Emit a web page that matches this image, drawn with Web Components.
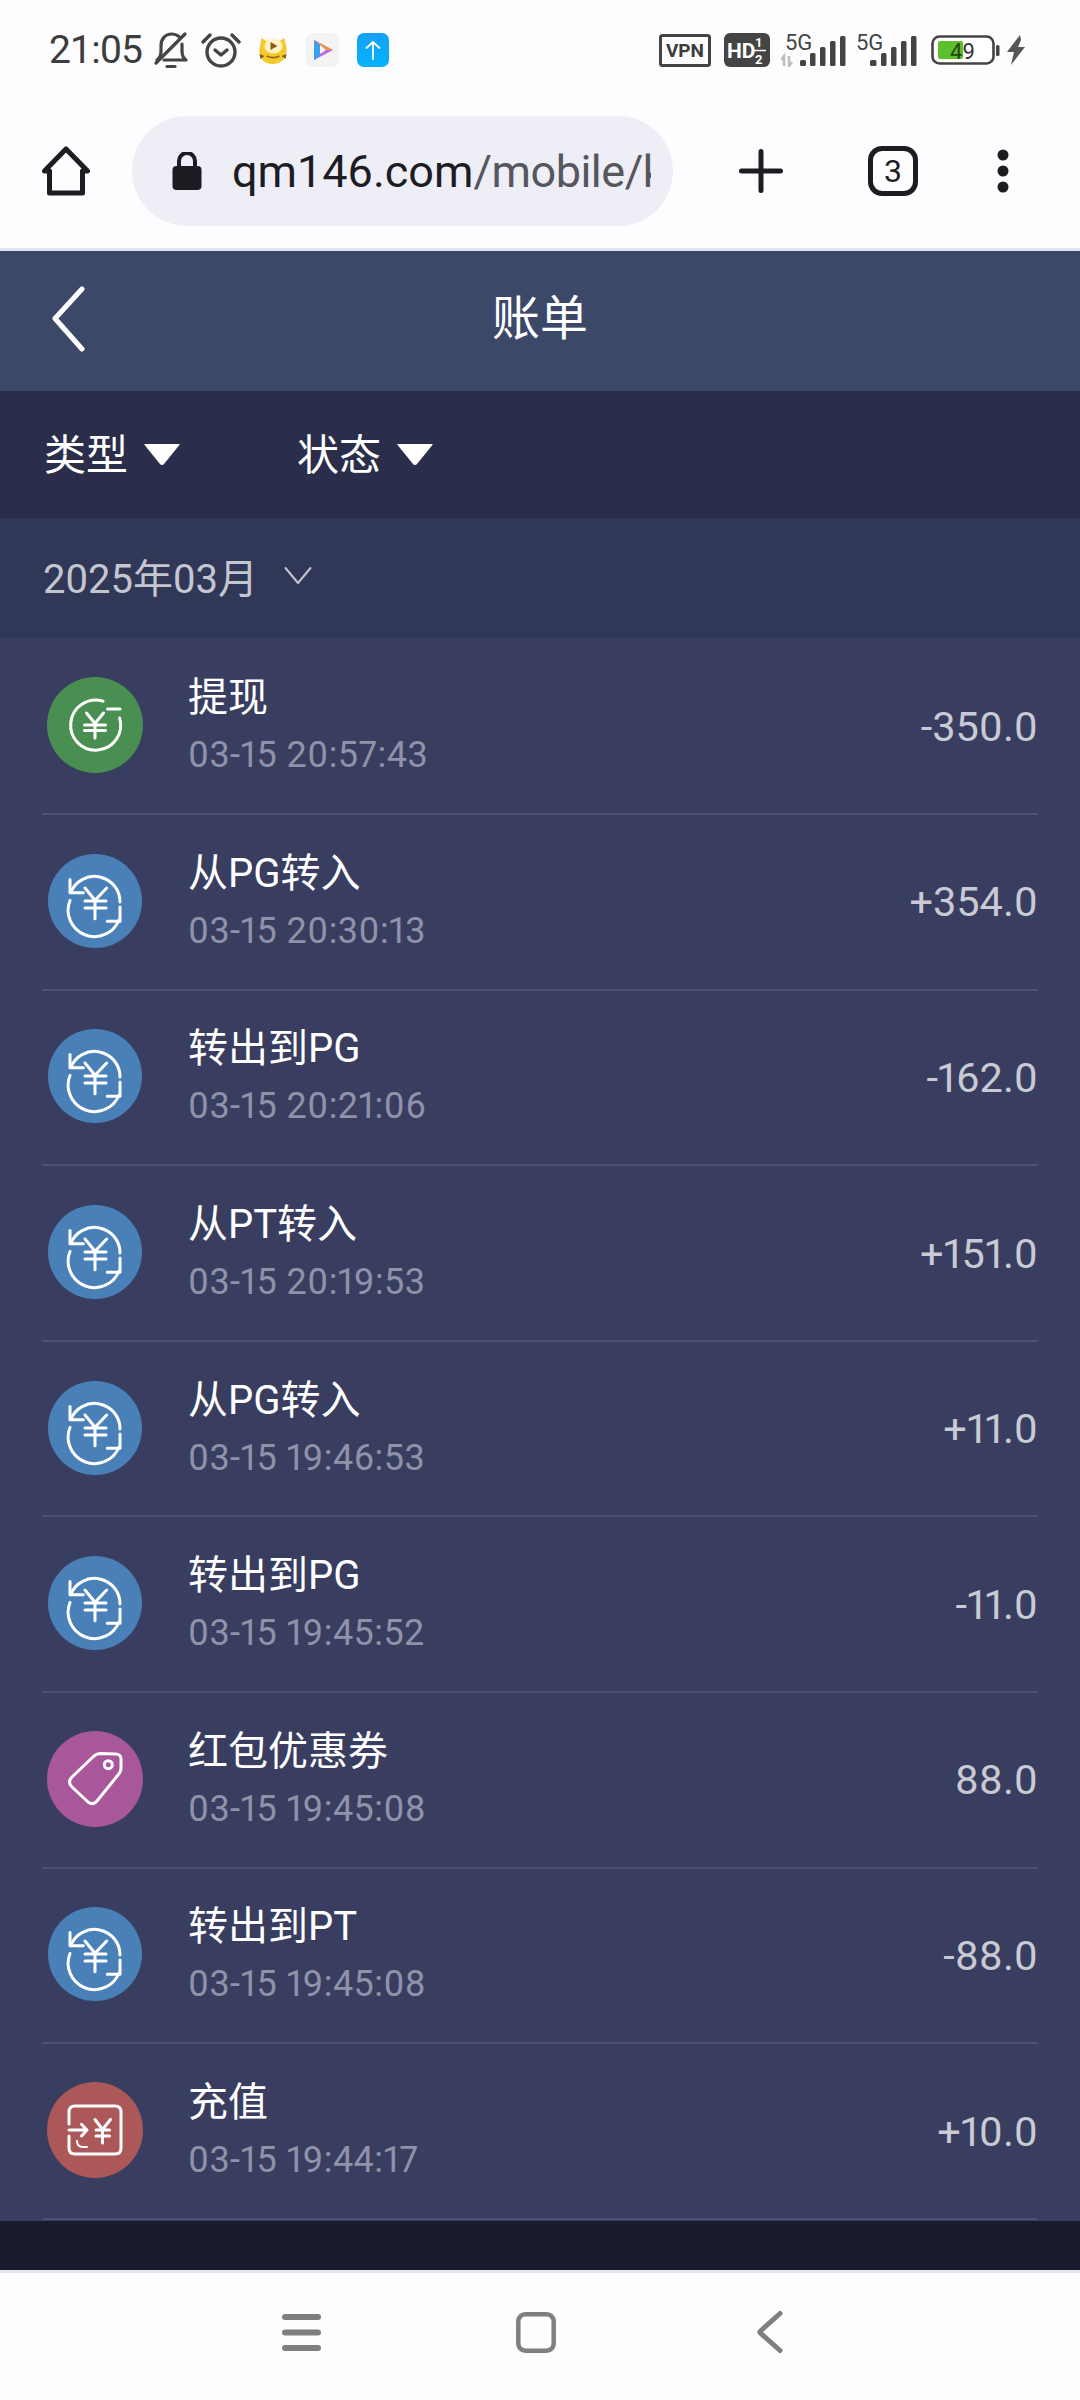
<!DOCTYPE html>
<html lang="zh">
<head>
<meta charset="utf-8">
<title>账单</title>
<style>
  html, body { margin: 0; padding: 0; }
  body {
    width: 1080px; height: 2400px; overflow: hidden;
    display: flex; flex-direction: column;
    background: #fdfcff;
    font-family: Roboto, "Noto Sans CJK SC", sans-serif;
  }
</style>
</head>
<body>
<status-bar></status-bar>
<browser-bar></browser-bar>
<bill-header>账单</bill-header>
<filter-bar>
  <filter-item>类型</filter-item>
  <filter-item>状态</filter-item>
</filter-bar>
<month-bar>2025年03月</month-bar>
<bill-list>
  <bill-row kind="withdraw" amount="-350.0" time="03-15 20:57:43">提现</bill-row>
  <bill-row kind="transfer" amount="+354.0" time="03-15 20:30:13">从PG转入</bill-row>
  <bill-row kind="transfer" amount="-162.0" time="03-15 20:21:06">转出到PG</bill-row>
  <bill-row kind="transfer" amount="+151.0" time="03-15 20:19:53">从PT转入</bill-row>
  <bill-row kind="transfer" amount="+11.0" time="03-15 19:46:53">从PG转入</bill-row>
  <bill-row kind="transfer" amount="-11.0" time="03-15 19:45:52">转出到PG</bill-row>
  <bill-row kind="coupon" amount="88.0" time="03-15 19:45:08">红包优惠券</bill-row>
  <bill-row kind="transfer" amount="-88.0" time="03-15 19:45:08">转出到PT</bill-row>
  <bill-row kind="recharge" amount="+10.0" time="03-15 19:44:17">充值</bill-row>
</bill-list>
<nav-bar></nav-bar>

<script>
class StatusBar extends HTMLElement {
  constructor() {
    super();
    this.attachShadow({ mode: 'open' });
    this.shadowRoot.innerHTML = `
      <style>
        :host { display: flex; align-items: center; height: 100px; box-sizing: border-box; padding: 0 55px 0 49px; color: #3c3c3c; font-family: Roboto, sans-serif; }
        svg { display: block; flex: none; }
        .time { font-size: 39px; letter-spacing: -.8px; line-height: 1; width: 104px; flex: none; }
        .left { display: flex; align-items: center; }
        .right { display: flex; align-items: center; margin-left: auto; }
        text { font-family: Roboto, sans-serif; }
      </style>
      <div class="left">
        <span class="time">21:05</span>
        <svg width="36" height="38" viewBox="0 0 36 38" fill="none" stroke="#444" stroke-width="3.200" stroke-linecap="round" stroke-linejoin="round">
          <path d="M4 29c3-2 4-5 4-9v-5C8 8 12 3 19 3c2.500 0 5 1 7 2.500"/><path d="M29 13v7c0 4 1 7 4 9H11"/>
          <path d="M3 32 32 3"/><path d="M14 35.500h8"/>
        </svg>
        <svg style="margin-left:12px" width="40" height="36" viewBox="0 0 40 36" fill="none" stroke="#444" stroke-width="3.400" stroke-linecap="round" stroke-linejoin="round">
          <circle cx="20" cy="20" r="14"/><path d="M14 18l6 5 6-5"/><path d="M2 10 9 3M38 10l-7-7"/>
        </svg>
        <svg style="margin-left:17px" width="30" height="30" viewBox="0 0 29 30">
          <path d="M3 3l5 3c4-2 9-2 13 0l5-3 2 10c1 9-4 16-14 16S0 22 1 13z" fill="#f6c92d"/>
          <ellipse cx="15" cy="11" rx="9" ry="7.500" fill="#fff3c4"/><path d="M12 7l7 4-7 4z" fill="#8b5a1e"/>
          <path d="M8 21c4 2 9 2 13 0" stroke="#8b6a1e" stroke-width="1.500" fill="none"/><path d="M1 19l5 2-4 3zM28 19l-5 2 4 3z" fill="#7a5a18"/>
        </svg>
        <svg style="margin-left:18px" width="33" height="34" viewBox="0 0 33 34">
          <rect width="33" height="34" rx="7" fill="#f3f3f1"/>
          <path d="M8 7l19 10L8 27z" fill="#b86cec"/><path d="M8 7l19 10-8 0z" fill="#f0933c"/><path d="M8 7l6 5v11l-6 4z" fill="#3aa0ee"/><path d="M14 12l6 5-6 4z" fill="#f3f3f1"/>
        </svg>
        <svg style="margin-left:17px" width="34" height="34" viewBox="0 0 32 34">
          <defs><linearGradient id="blue" x1="0" y1="0" x2="0" y2="1"><stop offset="0" stop-color="#14a0f6"/><stop offset="1" stop-color="#05b4fb"/></linearGradient></defs>
          <rect width="32" height="34" rx="7" fill="url(#blue)"/>
          <path d="M16 26V9M9.500 15 16 9l6.500 6" fill="none" stroke="#fff" stroke-width="1.800" stroke-linecap="round" stroke-linejoin="round"/>
        </svg>
      </div>
      <div class="right">
        <svg width="52" height="33" viewBox="0 0 52 33">
          <rect x="1.500" y="1.500" width="49" height="30" rx="2" fill="none" stroke="#444" stroke-width="3"/>
          <text x="26" y="23" font-size="19" font-weight="700" fill="#3c3c3c" text-anchor="middle">VPN</text>
        </svg>
        <svg style="margin-left:13px" width="46" height="34" viewBox="0 0 46 34">
          <rect width="46" height="34" rx="6" fill="#444"/>
          <text x="3" y="25" font-size="21" font-weight="700" fill="#fff">HD</text>
          <text x="31" y="14" font-size="13" font-weight="700" fill="#fff">1</text>
          <text x="31" y="31" font-size="13" font-weight="700" fill="#fff">2</text>
          <path d="M30 17.500h12" stroke="#fff" stroke-width="1.500"/>
        </svg>
        <svg style="margin-left:11px;margin-top:-6px" width="66" height="40" viewBox="0 -6 66 40">
          <text x="4" y="17" font-size="22" fill="#444">5G</text>
          <path d="M3 33V23l-3 4M8 23v10l3-4" fill="none" stroke="#bdbdbd" stroke-width="2.500"/>
          <g fill="#444"><rect x="19" y="27" width="6" height="6" rx="1.500"/><rect x="29" y="20" width="5.500" height="13" rx="1.500"/><rect x="39" y="14" width="5.500" height="19" rx="1.500"/><rect x="49" y="8" width="5.500" height="25" rx="1.500"/><rect x="59" y="3" width="5.500" height="30" rx="1.500"/></g>
        </svg>
        <svg style="margin-left:8px;margin-top:-6px" width="62" height="40" viewBox="0 -6 62 40">
          <text x="1" y="17" font-size="22" fill="#444">5G</text>
          <g fill="#444"><rect x="15" y="27" width="6.500" height="6" rx="1.500"/><rect x="26" y="20" width="5.500" height="13" rx="1.500"/><rect x="36" y="14" width="5.500" height="19" rx="1.500"/><rect x="46" y="8" width="5.500" height="25" rx="1.500"/><rect x="56" y="3" width="5.500" height="30" rx="1.500"/></g>
        </svg>
        <svg style="margin-left:14px" width="69" height="30" viewBox="0 0 69 30">
          <rect x="1.500" y="1.500" width="61" height="27" rx="7" fill="#fff" stroke="#444" stroke-width="2.600"/>
          <rect x="7" y="6" width="25" height="18" rx="2" fill="#5cc02e"/>
          <text x="19" y="24" font-size="22" fill="#333"><tspan fill="#1f4a0a">4</tspan>9</text>
          <rect x="65" y="10" width="3.500" height="11" rx="1.500" fill="#444"/>
        </svg>
        <svg style="margin-left:7px" width="18" height="30" viewBox="0 0 18 30"><path d="M13 0 0 17h7l-3 13 14-18h-7l3-7z" fill="#555"/></svg>
      </div>`;
  }
}

class BrowserBar extends HTMLElement {
  constructor() {
    super();
    this.attachShadow({ mode: 'open' });
    this.shadowRoot.innerHTML = `
      <style>
        :host { display: flex; align-items: center; height: 151px; box-sizing: border-box; padding: 16px 0 22px 41px; border-bottom: 3px solid #e4e4ee; background: #fdfdff; font-family: Roboto, sans-serif; }
        svg { display: block; flex: none; }
        .pill { width: 541px; height: 110px; margin-left: 41px; border-radius: 55px; background: #eeeef6; display: flex; align-items: center; box-sizing: border-box; padding-left: 40px; flex: none; }
        .url { width: 419px; margin-left: 30px; overflow: hidden; white-space: nowrap; font-size: 45px; color: #1c1c22; }
        .url span { color: #56565e; letter-spacing: -.5px; }
        .actions { display: flex; align-items: center; }
        .tabs { width: 50px; height: 50px; margin-left: 85px; box-sizing: border-box; border: 5px solid #1c1c22; border-radius: 14px; display: flex; align-items: center; justify-content: center; font-size: 32px; color: #1c1c22; flex: none; }
      </style>
      <svg width="50" height="50" viewBox="0 0 48 50" fill="none" stroke="#1c1c22" stroke-width="5" stroke-linejoin="round" stroke-linecap="round"><path d="M2.500 25 24 3l21.500 22H40.500v22h-33V25z"/></svg>
      <div class="pill">
        <svg width="30" height="38" viewBox="0 0 29 38"><path d="M6.500 15v-6a8 8 0 0 1 16 0v6" fill="none" stroke="#1c1c22" stroke-width="4"/><rect y="14" width="29" height="24" rx="4" fill="#1c1c22"/></svg>
        <div class="url">qm146.com<span>/mobile/k</span></div>
      </div>
      <div class="actions">
        <svg style="margin-left:66px" width="44" height="44" viewBox="0 0 44 44" stroke="#1c1c22" stroke-width="5" stroke-linecap="round"><path d="M2.500 22h39M22 2.500v39"/></svg>
        <div class="tabs">3</div>
        <svg style="margin-left:79px" width="12" height="44" viewBox="0 0 12 44" fill="#1c1c22"><circle cx="6" cy="6" r="5.500"/><circle cx="6" cy="22" r="5.500"/><circle cx="6" cy="38" r="5.500"/></svg>
      </div>`;
  }
}

class BillHeader extends HTMLElement {
  constructor() {
    super();
    this.attachShadow({ mode: 'open' });
    this.shadowRoot.innerHTML = `
      <style>
        :host { display: grid; grid-template-columns: 1fr auto 1fr; align-items: center; height: 140px; box-sizing: border-box; padding: 0 51px 5px; background: #3c4868; color: #fff; font-size: 48px; font-family: Roboto, "Noto Sans CJK SC", sans-serif; }
        svg { display: block; }
        .title { margin-bottom: 9px; }
      </style>
      <svg width="36" height="66" viewBox="0 0 36 66" fill="none" stroke="#fff" stroke-width="5" stroke-linecap="round" stroke-linejoin="round"><path d="M31 3 4 32.500 31 63"/></svg>
      <span class="title"><slot></slot></span>`;
  }
}

class FilterBar extends HTMLElement {
  constructor() {
    super();
    this.attachShadow({ mode: 'open' });
    this.shadowRoot.innerHTML = `
      <style>:host { display: flex; align-items: center; gap: 117px; height: 127px; box-sizing: border-box; padding: 0 0 7px 44px; background: #2a2e4b; }</style>
      <slot></slot>`;
  }
}

class FilterItem extends HTMLElement {
  constructor() {
    super();
    this.attachShadow({ mode: 'open' });
    this.shadowRoot.innerHTML = `
      <style>
        :host { display: flex; align-items: center; gap: 16px; color: #fff; font-size: 42px; font-family: Roboto, "Noto Sans CJK SC", sans-serif; }
        svg { display: block; margin-top: 6px; }
      </style>
      <slot></slot>
      <svg width="36" height="23" viewBox="0 0 36 23"><path d="M1 1h34c.6 0 .8.600.4 1L20 21c-1 1.300-3 1.300-4 0L.6 2C.2 1.600.4 1 1 1z" fill="#fff"/></svg>`;
  }
}

class MonthBar extends HTMLElement {
  constructor() {
    super();
    this.attachShadow({ mode: 'open' });
    this.shadowRoot.innerHTML = `
      <style>
        :host { display: flex; align-items: center; gap: 26px; height: 120px; box-sizing: border-box; padding: 0 0 4px 43px; background: #313757; color: #c4c6d0; font-size: 40px; font-family: Roboto, "Noto Sans CJK SC", sans-serif; }
        svg { display: block; margin-top: -2px; }
      </style>
      <slot></slot>
      <svg width="28" height="19" viewBox="0 0 28 19" fill="none" stroke="#c4c6d0" stroke-width="2" stroke-linecap="round" stroke-linejoin="round"><path d="M1.500 2 14 17 26.500 2"/></svg>`;
  }
}

class BillList extends HTMLElement {
  constructor() {
    super();
    this.attachShadow({ mode: 'open' });
    this.shadowRoot.innerHTML = `
      <style>:host { display: block; height: 1581.500px; padding: 1.500px 0 49px; background: linear-gradient(#393e61 0, #393e61 1583px, #191c2c 1583px); }</style>
      <slot></slot>`;
  }
}

const BILL_ICONS = {
  withdraw: { color: '#4a8f52', r: 48, art: `
    <path d="M72.600 41A25 25 0 1 1 56 24.300"/><path d="M60.500 32H73" stroke-width="3"/>
    <path d="M39.500 36 48 46.500 56.500 36M37.500 48h21M37.500 53.500h21M48 46.500V61"/>` },
  transfer: { color: '#4a80b8', r: 47, art: `
    <path d="M24 39A25.500 25.500 0 0 1 73 49"/><path d="M23 26.500V39.700H36.300"/>
    <path d="M23 47.500A25.500 25.500 0 0 0 72 67"/><path d="M73 54V68.300H60.300"/>
    <path d="M38 35 48 47.300 59.700 35M38 48H59M38 55H59M48 47.300V65.700"/>` },
  coupon: { color: '#a9579b', r: 48, art: `
    <path d="M25 46 47 25Q50 22.500 53 22.500L69 23Q74 23.500 74 28L74 37Q74 41 71 44L50 70Q46 75 41 71L25 56Q20 51 25 46Z"/>
    <circle cx="61.300" cy="33.700" r="4"/>` },
  recharge: { color: '#ad5858', r: 48, art: `
    <path d="M22 42V30Q22 24 28 24H68Q74 24 74 30V66Q74 72 68 72H28Q22 72 22 66V54"/>
    <path d="M22 48H39.500M34.500 42.300 40 48 34.500 54"/><path d="M30 59Q30 65 36 65H40" stroke-width="2"/>
    <path d="M48 37.500 55.500 47.500 63.500 37.500M49 48H62.500M49 54H62.500M55.500 47.500V61"/>` }
};

class BillRow extends HTMLElement {
  constructor() {
    super();
    const icon = BILL_ICONS[this.getAttribute('kind')];
    this.attachShadow({ mode: 'open' });
    this.shadowRoot.innerHTML = `
      <style>
        :host { display: flex; align-items: center; box-sizing: border-box; height: 175.600px; margin: 0 42px; border-bottom: 2.500px solid #4c5174; font-family: Roboto, "Noto Sans CJK SC", sans-serif; }
        svg { display: block; flex: none; margin: -2px 0 0 3px; }
        .text { display: flex; flex-direction: column; gap: 11px; margin: -3px 0 0 43px; }
        .title { color: #fff; font-size: 40px; line-height: 50px; }
        .time { color: #8f92a8; font-size: 36px; line-height: 42px; letter-spacing: .45px; font-variant-numeric: proportional-nums; }
        .amount { margin-left: auto; color: #c9cad3; font-size: 41.500px; font-variant-numeric: proportional-nums; }
      </style>
      <svg width="100" height="100" viewBox="-2 -2 100 100">
        <circle cx="48" cy="48" r="${icon.r}" fill="${icon.color}"/>
        <g fill="none" stroke="#fff" stroke-width="3" stroke-linecap="round" stroke-linejoin="round">${icon.art}</g>
      </svg>
      <div class="text">
        <div class="title"><slot></slot></div>
        <div class="time">${this.getAttribute('time')}</div>
      </div>
      <div class="amount">${this.getAttribute('amount')}</div>`;
  }
}

class NavBar extends HTMLElement {
  constructor() {
    super();
    this.attachShadow({ mode: 'open' });
    this.shadowRoot.innerHTML = `
      <style>
        :host { display: flex; align-items: center; justify-content: center; flex: 1; border-top: 3px solid #e4e4ee; background: #fdfcff; padding: 0 15px 9px 0; }
        svg { display: block; }
      </style>
      <svg width="39" height="37" viewBox="0 0 39 37" fill="#7f7f7f"><rect width="39" height="6" rx="3"/><rect y="15.500" width="39" height="6" rx="3"/><rect y="31" width="39" height="6" rx="3"/></svg>
      <svg style="margin-left:195px" width="40" height="41" viewBox="0 0 40 41" fill="none" stroke="#7f7f7f" stroke-width="4.500"><rect x="2.300" y="2.300" width="35.400" height="36.400" rx="7"/></svg>
      <svg style="margin-left:201px" width="26" height="42" viewBox="0 0 26 42" fill="none" stroke="#7f7f7f" stroke-width="5" stroke-linecap="round" stroke-linejoin="round"><path d="M23 2.500 3.500 20c-.7.700-.7 1.500 0 2.200L23 39.500"/></svg>`;
  }
}

customElements.define('status-bar', StatusBar);
customElements.define('browser-bar', BrowserBar);
customElements.define('bill-header', BillHeader);
customElements.define('filter-bar', FilterBar);
customElements.define('filter-item', FilterItem);
customElements.define('month-bar', MonthBar);
customElements.define('bill-list', BillList);
customElements.define('bill-row', BillRow);
customElements.define('nav-bar', NavBar);
</script>
</body>
</html>
